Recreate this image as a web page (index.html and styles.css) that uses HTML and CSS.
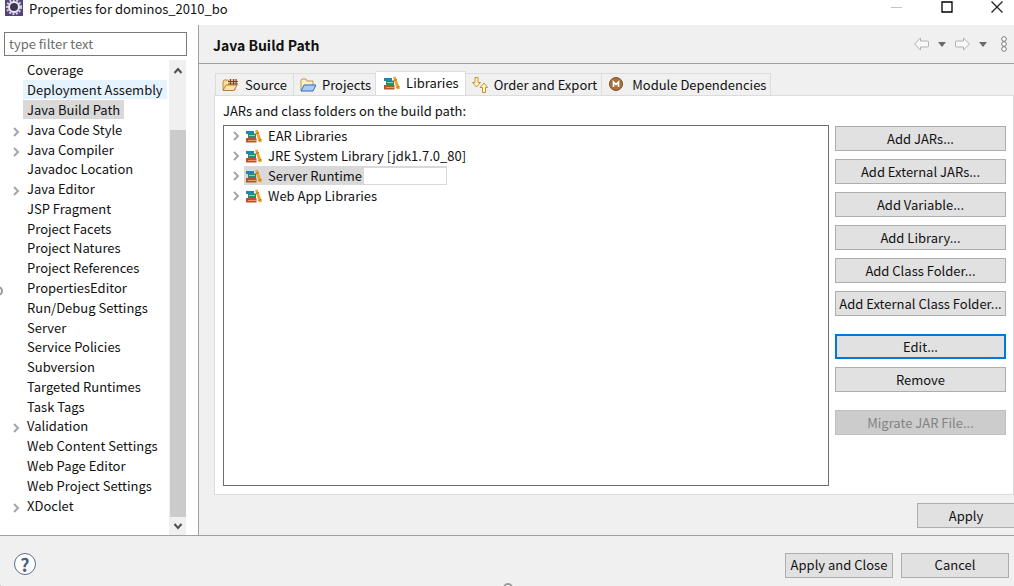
FILE: index.html
```html
<!DOCTYPE html>
<html lang="en">
<head>
    <meta charset="UTF-8">
    <meta name="viewport" content="width=device-width, initial-scale=1.0">
    <title>Properties for dominos_2010_bo</title>
    <link rel="stylesheet" href="styles.css">
</head>
<body>
    <!-- Shared icons -->
    <svg class="sprite" aria-hidden="true">
        <symbol id="books" viewBox="0 0 16 16">
            <path d="M0 3h8v3H0z" fill="#1c84b8"/>
            <path d="M2 5.500h8V10H2z" fill="#2b8c6c"/>
            <path d="M3 7h6v1H3z" fill="#8fccb0"/>
            <path d="M0 10h10.500v4.500H0z" fill="#b9532a"/>
            <path d="M2 12h8v1H2z" fill="#e09a6c"/>
            <path d="M9 2.500L11.500 1.500 16 13.500 13 14.500z" fill="#eda42c"/>
            <path d="M10 5.500l3-1M12.500 12.500l3-1" stroke="#b9701a"/>
        </symbol>
        <symbol id="chevron" viewBox="0 0 8 10">
            <path d="M2 1l4 4-4 4" fill="none" stroke="#a6a6a6" stroke-width="2"/>
        </symbol>
        <symbol id="arrow" viewBox="0 0 16 14">
            <path d="M1 7l6-6v3h7q1 0 1 1v4q0 1-1 1H7v3z" fill="#f8f8f8" stroke="#b0b0b0"/>
        </symbol>
    </svg>

    <div class="window">
        <header class="titlebar">
            <svg class="app-icon" viewBox="0 0 18 16">
                <path d="M0 0h18v16H0z" fill="#55437c"/>
                <circle cx="9" cy="7" r="7" fill="none" stroke="#d5d0df" stroke-width="2" stroke-dasharray="2 1.500"/>
                <circle cx="9" cy="7" r="5" fill="#3d3654" stroke="#efedf3" stroke-width="2"/>
            </svg>
            <h1>Properties for dominos_2010_bo</h1>
            <div class="window-buttons">
                <button type="button" aria-label="Minimize"><svg viewBox="0 0 12 12"><path d="M0 6.500h11" stroke="#c4c4c4"/></svg></button>
                <button type="button" aria-label="Maximize"><svg viewBox="0 0 12 12"><path d="M1 1h10v10H1z" fill="none" stroke="#000" stroke-width="1.300"/></svg></button>
                <button type="button" aria-label="Close"><svg viewBox="0 0 12 12"><path d="M.5.5l11 11M11.500.5l-11 11" stroke="#222" stroke-width="1.300"/></svg></button>
            </div>
        </header>

        <div class="content">
            <aside class="sidebar">
                <input type="text" class="filter" placeholder="type filter text" aria-label="Filter">
                <div class="tree-wrap">
                    <ul class="tree">
                        <li><span>Coverage</span></li>
                        <li class="hover"><span>Deployment Assembly</span></li>
                        <li class="selected"><span>Java Build Path</span></li>
                        <li><svg class="chevron"><use href="#chevron"/></svg><span>Java Code Style</span></li>
                        <li><svg class="chevron"><use href="#chevron"/></svg><span>Java Compiler</span></li>
                        <li><span>Javadoc Location</span></li>
                        <li><svg class="chevron"><use href="#chevron"/></svg><span>Java Editor</span></li>
                        <li><span>JSP Fragment</span></li>
                        <li><span>Project Facets</span></li>
                        <li><span>Project Natures</span></li>
                        <li><span>Project References</span></li>
                        <li><span>PropertiesEditor</span></li>
                        <li><span>Run/Debug Settings</span></li>
                        <li><span>Server</span></li>
                        <li><span>Service Policies</span></li>
                        <li><span>Subversion</span></li>
                        <li><span>Targeted Runtimes</span></li>
                        <li><span>Task Tags</span></li>
                        <li><svg class="chevron"><use href="#chevron"/></svg><span>Validation</span></li>
                        <li><span>Web Content Settings</span></li>
                        <li><span>Web Page Editor</span></li>
                        <li><span>Web Project Settings</span></li>
                        <li><svg class="chevron"><use href="#chevron"/></svg><span>XDoclet</span></li>
                    </ul>
                    <div class="scrollbar">
                        <svg viewBox="0 0 10 10"><path d="M1.500 7L5 3l3.500 4" fill="none" stroke="#505050" stroke-width="2"/></svg>
                        <div class="thumb"></div>
                        <svg viewBox="0 0 10 10"><path d="M1.500 3L5 7l3.500-4" fill="none" stroke="#505050" stroke-width="2"/></svg>
                    </div>
                </div>
            </aside>

            <main class="page">
                <div class="page-header">
                    <h2>Java Build Path</h2>
                    <div class="nav">
                        <button type="button" aria-label="Back"><svg class="arrow"><use href="#arrow"/></svg></button>
                        <button type="button" aria-label="Back history"><svg class="caret" viewBox="0 0 8 5"><path d="M0 0h8L4 5z"/></svg></button>
                        <button type="button" aria-label="Forward"><svg class="arrow forward"><use href="#arrow"/></svg></button>
                        <button type="button" aria-label="Forward history"><svg class="caret" viewBox="0 0 8 5"><path d="M0 0h8L4 5z"/></svg></button>
                        <button type="button" aria-label="Menu"><svg class="dots" viewBox="0 0 6 16"><g fill="#fff" stroke="#777"><circle cx="3" cy="3" r="2.300"/><circle cx="3" cy="8" r="2.300"/><circle cx="3" cy="13" r="2.300"/></g></svg></button>
                    </div>
                </div>

                <div class="tabs" role="tablist">
                    <button type="button" role="tab" class="tab source">
                        <svg viewBox="0 0 16 16">
                            <path d="M1 13V5l1-2h4l1 2h6v8z" fill="#f5dda0" stroke="#c08a3c"/>
                            <path d="M7 2h8v6H7z" fill="#e2c3a4"/>
                            <path d="M6 4.500h10M6 7h10M8.500 2v6M11.500 2v6M14 2v6" stroke="#70432c"/>
                            <path d="M1 13.500L4 8h11l-3 5.500z" fill="#f9e2a5" stroke="#b98136"/>
                        </svg>
                        Source
                    </button>
                    <button type="button" role="tab" class="tab">
                        <svg viewBox="0 0 16 16">
                            <path d="M1 13V3l1-1h4l1 2h6v9z" fill="#faf0c8" stroke="#b99a50"/>
                            <path d="M1 14l3-6h12l-3 6z" fill="#a8cdf5" stroke="#3567b5"/>
                        </svg>
                        Projects
                    </button>
                    <button type="button" role="tab" class="tab active" aria-selected="true">
                        <svg><use href="#books"/></svg>
                        Libraries
                    </button>
                    <button type="button" role="tab" class="tab">
                        <svg viewBox="0 0 16 16">
                            <path d="M3 .5h3v5h2.500l-4 4.500-4-4.500H3z" fill="#fff6cf" stroke="#c4922a"/>
                            <path d="M10.500 15.500h3v-5h2l-3.500-4.500-4 4.500h2.500z" fill="#fff6cf" stroke="#c4922a"/>
                        </svg>
                        Order and Export
                    </button>
                    <button type="button" role="tab" class="tab module">
                        <svg viewBox="0 0 16 16">
                            <circle cx="8" cy="7" r="6.500" fill="#a8713c" stroke="#7e4f25"/>
                            <path d="M5.500 10V5L8 7.500 10.500 5v5" fill="none" stroke="#fff" stroke-width="1.600"/>
                        </svg>
                        Module Dependencies
                    </button>
                </div>

                <section class="panel">
                    <p class="caption">JARs and class folders on the build path:</p>
                    <div class="panel-body">
                        <ul class="entries">
                            <li><svg class="chevron"><use href="#chevron"/></svg><div class="entry"><svg><use href="#books"/></svg>EAR Libraries</div></li>
                            <li><svg class="chevron"><use href="#chevron"/></svg><div class="entry"><svg><use href="#books"/></svg>JRE System Library [jdk1.7.0_80]</div></li>
                            <li><svg class="chevron"><use href="#chevron"/></svg><div class="entry selected"><svg><use href="#books"/></svg>Server Runtime<span class="blank"></span></div></li>
                            <li><svg class="chevron"><use href="#chevron"/></svg><div class="entry"><svg><use href="#books"/></svg>Web App Libraries</div></li>
                        </ul>
                        <div class="actions">
                            <button type="button" class="button">Add JARs...</button>
                            <button type="button" class="button">Add External JARs...</button>
                            <button type="button" class="button">Add Variable...</button>
                            <button type="button" class="button">Add Library...</button>
                            <button type="button" class="button">Add Class Folder...</button>
                            <button type="button" class="button">Add External Class Folder...</button>
                            <button type="button" class="button focused group-start">Edit...</button>
                            <button type="button" class="button">Remove</button>
                            <button type="button" class="button group-start" disabled>Migrate JAR File...</button>
                        </div>
                    </div>
                </section>

                <div class="apply-row">
                    <button type="button" class="button apply">Apply</button>
                </div>
            </main>
        </div>

        <footer class="footer">
            <button type="button" class="help" aria-label="Help">?</button>
            <button type="button" class="button dialog-button">Apply and Close</button>
            <button type="button" class="button dialog-button">Cancel</button>
        </footer>

        <!-- Resize handles on the window edge -->
        <span class="handle handle-left"></span>
        <span class="handle handle-bottom"></span>
        <span class="handle handle-corner"></span>
    </div>
</body>
</html>
```
FILE: styles.css
```css
* {
    box-sizing: border-box;
}
body {
    margin: 0;
    font-family: "Noto Sans CJK KR", "Noto Sans", sans-serif;
    font-size: 13px;
    line-height: 18px;
    color: #111;
    background: #fff;
}
h1, h2, p, ul {
    margin: 0;
    padding: 0;
}
h1 {
    font-size: 13px;
    font-weight: normal;
}
h2 {
    font-size: 14px;
}
ul {
    list-style: none;
}
button {
    padding: 0;
    border: 0;
    background: none;
    font: inherit;
    color: inherit;
    white-space: nowrap;
}
svg {
    display: block;
    flex: none;
}
.sprite {
    display: none;
}
.window {
    position: relative;
    display: flex;
    flex-direction: column;
    height: 100vh;
    overflow: hidden;
}

/* Title bar */
.titlebar {
    display: flex;
    align-items: flex-start;
    gap: 6px;
    height: 25px;
    padding: 0 11px 0 5px;
}
.app-icon {
    width: 18px;
    height: 16px;
}
.window-buttons {
    display: flex;
    gap: 38px;
    margin: 1px 0 0 auto;
}
.window-buttons svg {
    width: 12px;
    height: 12px;
}

/* Left side */
.content {
    display: flex;
    flex: 1;
    min-height: 0;
}
.sidebar {
    display: flex;
    flex: none;
    flex-direction: column;
    width: 199px;
    padding: 7px 11px 0 4px;
    border-right: 1px solid #a0a0a0;
}
.filter {
    width: 100%;
    height: 24px;
    padding: 0 4px 2px;
    border: 1px solid #7a7a7a;
    font: inherit;
}
.filter::placeholder {
    color: #6d6d6d;
}
.tree-wrap {
    display: flex;
    flex: 1;
    min-height: 0;
    padding-top: 4px;
}
.tree {
    display: flex;
    flex: 1;
    flex-direction: column;
    min-width: 0;
    padding-bottom: 20px;
}
.tree li {
    display: flex;
    flex: 1;
    align-items: center;
    min-height: 0;
    padding-left: 19px;
    white-space: nowrap;
}
.tree span {
    padding: 0 4px;
    line-height: 19px;
}
.tree .hover span {
    background: #e5f3ff;
}
.tree .selected span {
    background: #d9d9d9;
}
.chevron {
    width: 8px;
    height: 10px;
    margin-top: 5px;
}
.tree .chevron {
    margin-left: -11px;
    margin-right: 3px;
}
.scrollbar {
    display: flex;
    flex-direction: column;
    align-items: center;
    width: 17px;
    margin-right: 1px;
    padding: 6px 0 4px;
    background: #f0f0f0;
}
.scrollbar svg {
    width: 10px;
    height: 10px;
}
.thumb {
    flex: 1;
    width: 16px;
    margin: 54px 0 4px;
    background: #cbcbcb;
}

/* Right side */
.page {
    display: flex;
    flex: 1;
    flex-direction: column;
    min-width: 0;
    background: #f0f0f0;
}
.page-header {
    display: flex;
    align-items: center;
    justify-content: space-between;
    height: 39px;
    padding: 2px 7px 0 14px;
    border-bottom: 1px solid #a0a0a0;
}
.nav {
    display: flex;
    align-items: center;
    gap: 8px;
    padding-bottom: 2px;
}
.nav .arrow {
    width: 17px;
    height: 14px;
}
.nav .forward {
    transform: scaleX(-1);
}
.nav .caret {
    width: 8px;
    height: 5px;
    fill: #6a6a6a;
}
.nav .dots {
    width: 6px;
    height: 16px;
    margin-left: 6px;
}
.tabs {
    display: flex;
    align-items: flex-end;
    height: 31px;
    padding-left: 16px;
}
.tab {
    display: flex;
    align-items: center;
    gap: 6px;
    height: 22px;
    padding: 0 4px 0 6px;
    border: 1px solid #dcdcdc;
    border-left: 0;
    border-bottom: 0;
}
.tab.source {
    gap: 7px;
    padding-right: 6px;
    border-left: 1px solid #dcdcdc;
}
.tab.module {
    gap: 8px;
}
.tab svg {
    width: 16px;
    height: 16px;
}
.tab.active {
    height: 25px;
    padding: 0 6px 2px 8px;
    margin-bottom: -1px;
    background: #fff;
}
.panel {
    display: flex;
    flex: 1;
    flex-direction: column;
    margin-left: 15px;
    min-height: 0;
    padding: 6px 7px 8px 8px;
    border: 1px solid #dcdcdc;
    background: #fff;
}
.panel-body {
    display: flex;
    flex: 1;
    gap: 6px;
    min-height: 0;
    margin-top: 5px;
}
.entries {
    flex: 1;
    border: 1px solid #6e6e6e;
}
.entries li {
    display: flex;
    align-items: flex-start;
    height: 20px;
    padding-left: 8px;
}
.entry {
    display: flex;
    align-items: center;
    gap: 6px;
    height: 19px;
    margin-left: 4px;
    padding: 0 2px;
    line-height: 17px;
    white-space: nowrap;
}
.entry svg {
    width: 16px;
    height: 16px;
}
.entry.selected {
    padding-right: 1px;
    background: #d9d9d9;
}
.blank {
    width: 82px;
    height: 16px;
    margin-left: -4px;
    background: #fff;
}
.actions {
    display: flex;
    flex-direction: column;
    gap: 8px;
    width: 171px;
    padding-top: 1px;
}
.button {
    height: 25px;
    border: 1px solid #adadad;
    background: #e1e1e1;
}
.button.focused {
    border: 2px solid #0078d7;
}
.button.group-start {
    margin-top: 10px;
}
.button:disabled {
    border-color: #bfbfbf;
    background: #ccc;
    color: #838383;
}
.apply-row {
    display: flex;
    justify-content: flex-end;
    height: 40px;
    padding-top: 8px;
}
.apply {
    width: 98px;
    margin-right: -1px;
}

/* Bottom bar */
.footer {
    display: flex;
    align-items: center;
    gap: 8px;
    height: 51px;
    padding: 8px 5px 0 14px;
    border-top: 1px solid #a0a0a0;
    background: #f0f0f0;
}
.help {
    width: 22px;
    height: 22px;
    margin: 0 auto 2px 0;
    border: 1px solid #5d6d8b;
    border-radius: 50%;
    background: #fff;
    color: #4c5f82;
    font-size: 18px;
    font-weight: bold;
    line-height: 20px;
}
.dialog-button {
    width: 108px;
}
.handle {
    position: absolute;
    width: 10px;
    height: 10px;
    border: 2px solid #999;
    border-radius: 50%;
    background: #fff;
}
.handle-left {
    left: -7px;
    top: 286px;
}
.handle-bottom {
    left: 50%;
    bottom: -7px;
    margin-left: -4px;
}
.handle-corner {
    left: -8px;
    bottom: -8px;
}
```
